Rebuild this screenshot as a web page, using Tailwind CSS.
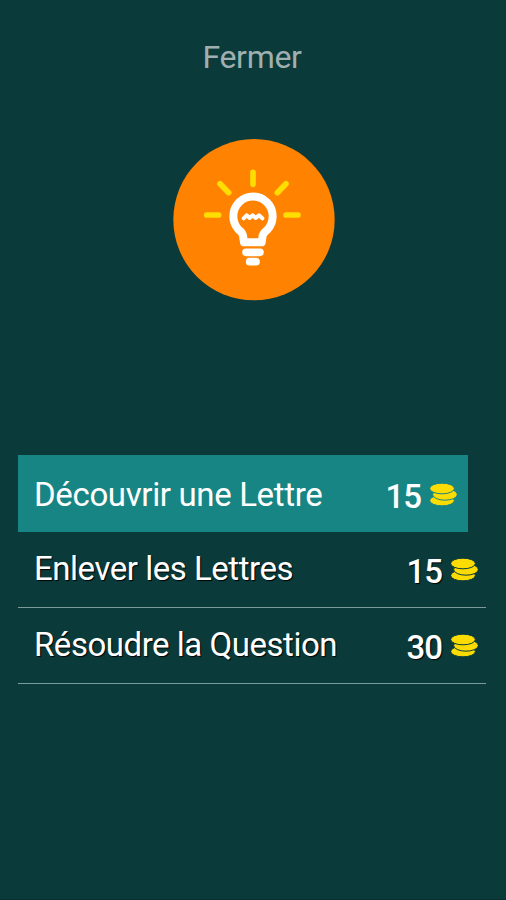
<!DOCTYPE html>
<html lang="fr">
<head>
    <meta charset="UTF-8">
    <meta name="viewport" content="width=device-width, initial-scale=1.0">
    <title>Indices</title>
    <script src="https://cdn.jsdelivr.net/npm/@tailwindcss/browser@4"></script>
</head>
<body class="bg-[#0a3b3a] font-[Roboto,sans-serif]">
    <!-- Coin stack shared by the price labels, currentColor draws the gaps -->
    <svg class="hidden">
        <symbol id="coins" viewBox="0 0 81 68">
            <g fill="#fddc03" stroke="currentColor" stroke-width="3">
                <ellipse cx="36" cy="52" rx="37" ry="16"/>
                <ellipse cx="45" cy="34" rx="37" ry="17"/>
                <ellipse cx="36" cy="16" rx="37" ry="16"/>
            </g>
        </symbol>
    </svg>

    <main class="flex h-screen flex-col border-b border-[#062f2e]">
        <button class="mt-[37px] h-10 pr-[2px] text-center text-[32px] leading-10 tracking-[-0.3px] text-[#a0b0b0]">Fermer</button>

        <!-- Light bulb -->
        <svg class="mt-[62px] ml-[172.5px] size-[162px] shrink-0" viewBox="23 27 486 486" fill="none" stroke-linecap="round" stroke-linejoin="round">
            <circle cx="266" cy="269" r="242" fill="#ff8200"/>
            <g stroke="#ffdd00" stroke-width="17" stroke-linecap="round">
                <path d="M263 127V163M164 161L190 188M362 161L336 188M124 255H160M362 255H398"/>
            </g>
            <g stroke="#fff">
                <path stroke-width="24" d="M236 337H289L292 316Q295 307 306 299A59 59 0 1 0 220 299Q231 307 233 316Z"/>
                <path stroke-width="12" d="M235 265L244 256L253 264L262 256L271 264L281 256L291 265"/>
                <path stroke-width="23" d="M242 367H284M253 395H272"/>
            </g>
        </svg>

        <ul class="mt-[154px] ml-[18px] w-[468px] text-[33px] text-white">
            <li class="flex h-[77px] w-[450px] items-center bg-[#178583] pr-[11px] pl-4">
                <span class="flex-1 pt-[2px] tracking-[-0.35px]">Découvrir une Lettre</span>
                <span class="mr-[9px] pt-[7px] font-medium tracking-[-1px]">15</span>
                <svg class="mt-px h-[23px] w-[27px] text-[#178583]"><use href="#coins"/></svg>
            </li>
            <li class="flex h-[76px] items-center border-b border-[#7b9a99] pr-2 pb-[2px] pl-4 text-shadow-[1px_1px_1px_#000]">
                <span class="flex-1 tracking-[-0.47px]">Enlever les Lettres</span>
                <span class="mr-[9px] pt-[7px] font-medium tracking-[-1px]">15</span>
                <svg class="mt-px h-[23px] w-[27px] text-[#0a3b3a]"><use href="#coins"/></svg>
            </li>
            <li class="flex h-[76px] items-center border-b border-[#7b9a99] pr-2 pb-[2px] pl-4 text-shadow-[1px_1px_1px_#000]">
                <span class="flex-1 tracking-[-0.47px]">Résoudre la Question</span>
                <span class="mr-[9px] pt-[7px] font-medium tracking-[-1px]">30</span>
                <svg class="mt-px h-[23px] w-[27px] text-[#0a3b3a]"><use href="#coins"/></svg>
            </li>
        </ul>
    </main>
</body>
</html>
